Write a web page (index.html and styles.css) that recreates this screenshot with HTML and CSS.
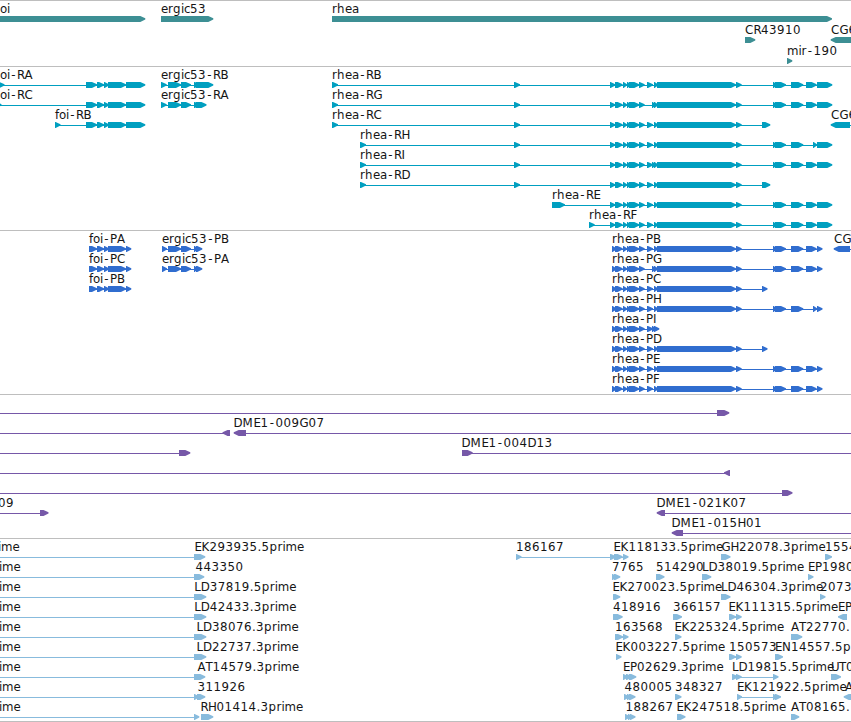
FILE: index.html
```
<!DOCTYPE html>
<html lang="en">
<head>
    <meta charset="UTF-8">
    <title>Genome Browser</title>
    <link rel="stylesheet" href="styles.css">
</head>
<body>
    <div class="tracks">
        <svg class="track genes" id="genes"></svg>
        <svg class="track transcripts" id="transcripts"></svg>
        <svg class="track proteins" id="proteins"></svg>
        <svg class="track bacs" id="bacs"></svg>
        <svg class="track ests" id="ests"></svg>
    </div>
    <script src="tracks.js"></script>
</body>
</html>
```
FILE: styles.css
```
body {
    margin: 0;
    background-color: #fff;
    overflow: hidden;
}
.tracks {
    display: flex;
    flex-direction: column;
    height: 721px;
    border-bottom: 1px solid #bebebe;
}
.track {
    display: block;
    box-sizing: border-box;
    width: 100%;
    flex: none;
    border-top: 1px solid #bebebe;
    overflow: hidden;
}
.track text {
    font-family: "DejaVu Sans", sans-serif;
    font-size: 11.8px;
    fill: #151515;
}
.track rect {
    shape-rendering: crispEdges;
}
.genes {
    height: 66px;
    fill: #3d8f94;
}
.transcripts {
    height: 164px;
    fill: #009fc0;
}
.proteins {
    height: 164px;
    fill: #306dcf;
}
.bacs {
    height: 144px;
    fill: #7658a8;
}
.ests {
    height: 183px;
    fill: #88bbdd;
}
```
FILE: tracks.js
```
const NS = 'http://www.w3.org/2000/svg';

// character widths in pixels, digits and anything else are 8
const widths = {
    A: 8, B: 7, C: 8.5, D: 9, E: 7, G: 9, H: 8.5, I: 4, K: 8, L: 6.5, M: 11, N: 9,
    P: 7, R: 7.5, T: 7, U: 8, a: 7, c: 6, e: 7, f: 4, g: 8, h: 8, i: 3, m: 11.5,
    o: 7, p: 8, r: 5, '-': 7, '.': 4
};

function add(svg, tag, attrs) {
    const el = document.createElementNS(NS, tag);
    for (const k in attrs) el.setAttribute(k, attrs[k]);
    svg.appendChild(el);
    return el;
}

// one x per character
function drawLabel(svg, x, y, label) {
    const xs = [];
    for (const ch of label) {
        xs.push(ch === '-' ? x + 1.3 : x);
        x += widths[ch] || 8;
    }
    add(svg, 'text', { x: xs.join(' '), y: y }).textContent = label;
}

function drawBlock(svg, x1, x2, y, strand) {
    const tip = Math.min(5, x2 - x1 - 0.6);
    const pts = strand < 0
        ? [[x2, y], [x1 + tip, y], [x1, y + 2.3], [x1, y + 3.4], [x1 + tip, y + 6], [x2, y + 6]]
        : [[x1, y], [x2 - tip, y], [x2, y + 2.3], [x2, y + 3.4], [x2 - tip, y + 6], [x1, y + 6]];
    add(svg, 'polygon', { points: pts.join(' ') });
}

// feature: [row, label x, label, blocks, line, strand]
function drawTrack(id, pitch, features) {
    const svg = document.getElementById(id);
    for (const [row, lx, label, blocks, line, strand] of features) {
        const y = 15 + row * pitch;
        if (line) add(svg, 'rect', { x: line[0], y: y + 3, width: line[1] - line[0], height: 1 });
        for (const b of blocks) drawBlock(svg, b[0], b[1], y, strand || 1);
    }
    for (const [row, lx, label] of features) {
        if (label) drawLabel(svg, lx, 12 + row * pitch, label);
    }
}

drawTrack('genes', 21, [
    [0, 0, 'oi', [[-20, 145.3]]],
    [0, 161, 'ergic53', [[161, 213.3]]],
    [0, 332, 'rhea', [[332, 832]]],
    [1, 745, 'CR43910', [[745, 755.3]]],
    [1, 831, 'CG6', [[830.7, 870]], null, -1],
    [2, 787, 'mir-190', [[787, 792.3]]]
]);

// exons shared by the isoforms
const foi = [[97, 104], [104, 109], [108, 126]];
const ergic = [[168, 181], [181, 191], [194, 198]];
const head = [[615, 622.7], [623, 627], [627, 631], [629, 639.3], [639, 644.7]];
const e1 = [[647, 653]];
const e2 = [[652, 656]];
const body = [[654, 658], [657, 736], [736, 741.7]];
const tail = [[773, 777], [775, 786], [791, 803.3]];
const t1 = [[806, 816.7]];
const t2 = [[813, 817]];

const foiR = [[86, 97], ...foi, [126, 145.3]];
const rHead = [[514, 520], [610, 615.3], ...head];
const rEnd = [[817, 832.3]];
const rShort = [[762, 770.3]];

drawTrack('transcripts', 20, [
    [0, 0, 'oi-RA', [[-1, 4.5], ...foiR], [0, 140]],
    [1, 0, 'oi-RC', [[-4, 1.5], ...foiR], [0, 140]],
    [2, 55, 'foi-RB', [[55, 60.5], ...foiR], [55, 140]],
    [0, 161, 'ergic53-RB', [[161, 166.7], ...ergic, [195.5, 213.3]], [161, 208]],
    [1, 161, 'ergic53-RA', [[161, 166.7], ...ergic, [195.5, 206.5]], [161, 202]],
    [0, 332, 'rhea-RB', [[332, 338], ...rHead, ...e1, ...body, ...tail, ...t1, ...rEnd], [332, 828]],
    [1, 332, 'rhea-RG', [[332, 338], ...rHead, ...e2, ...body, ...tail, ...t1, ...rEnd], [332, 828]],
    [2, 332, 'rhea-RC', [[332, 338], ...rHead, ...e1, ...body, ...rShort], [332, 768]],
    [3, 360, 'rhea-RH', [[360, 366], ...rHead, ...e1, ...body, ...tail, ...t2, ...rEnd], [360, 828]],
    [4, 360, 'rhea-RI', [[360, 366], ...rHead, ...e1, ...e2, ...body, ...tail, ...t1, ...rEnd], [360, 828]],
    [5, 360, 'rhea-RD', [[360, 366], ...rHead, ...e1, ...body, ...rShort], [360, 768]],
    [6, 552, 'rhea-RE', [[552, 565], ...rHead.slice(1), ...e1, ...body, ...tail, ...t1, ...rEnd], [552, 828]],
    [7, 589, 'rhea-RF', [[589, 594.7], ...rHead.slice(1), ...e1, ...body, ...tail, ...t1, ...rEnd], [589, 828]],
    [2, 831, 'CG6', [[830.7, 850]], [836, 851], -1]
]);

const foiP = [[89, 97], ...foi, [126, 131.3]];
const ergicP = [[162, 167], ...ergic, [196, 202.3]];
const pHead = [[612, 616.5], ...head];
const pEnd = [[817, 822.5]];
const pShort = [[762, 767.5]];

drawTrack('proteins', 20, [
    [0, 89, 'foi-PA', foiP, [89, 130]],
    [1, 89, 'foi-PC', foiP, [89, 130]],
    [2, 89, 'foi-PB', foiP, [89, 130]],
    [0, 162, 'ergic53-PB', ergicP, [162, 201]],
    [1, 162, 'ergic53-PA', ergicP, [162, 201]],
    [0, 612, 'rhea-PB', [...pHead, ...e1, ...body, ...tail, ...t1, ...pEnd], [612, 821]],
    [1, 612, 'rhea-PG', [...pHead, ...e2, ...body, ...tail, ...t1, ...pEnd], [612, 821]],
    [2, 612, 'rhea-PC', [...pHead, ...e1, ...body, ...pShort], [612, 766]],
    [3, 612, 'rhea-PH', [...pHead, ...e1, ...body, ...tail, ...t2, ...pEnd], [612, 821]],
    [4, 612, 'rhea-PI', [...pHead, ...e1, ...e2, [654, 659.3]], [612, 658]],
    [5, 612, 'rhea-PD', [...pHead, ...e1, ...body, ...pShort], [612, 766]],
    [6, 612, 'rhea-PE', [...pHead, ...e1, ...body, ...tail, ...t1, ...pEnd], [612, 821]],
    [7, 612, 'rhea-PF', [...pHead, ...e1, ...body, ...tail, ...t1, ...pEnd], [612, 821]],
    [0, 834, 'CG', [[833.7, 850]], [840, 851], -1]
]);

drawTrack('bacs', 20, [
    [0, 0, '', [[717, 729.3]], [0, 720]],
    [1, 0, '', [[222.5, 230]], [0, 226], -1],
    [1, 233.5, 'DME1-009G07', [[233.7, 246]], [240, 851], -1],
    [2, 0, '', [[179, 190.3]], [0, 182]],
    [2, 461.5, 'DME1-004D13', [[462, 472.7]], [462, 851]],
    [3, 0, '', [[724, 730]], [0, 728], -1],
    [4, 0, '', [[782, 792.5]], [0, 786]],
    [5, -2, '09', [[40, 48.5]], [0, 44]],
    [5, 656.5, 'DME1-021K07', [[656.7, 665]], [661, 851], -1],
    [6, 671.5, 'DME1-015H01', [[671.7, 683]], [677, 851], -1]
]);

drawTrack('ests', 20, [
    [0, -2, 'ime', []],
    [1, -1, 'ime', []],
    [2, -1, 'ime', []],
    [3, -1, 'ime', []],
    [4, -1, 'ime', []],
    [5, -1, 'ime', []],
    [6, -1, 'ime', []],
    [7, -1, 'ime', []],
    [8, -1, 'ime', []],
    [0, 194.5, 'EK293935.5prime', [[194, 205.3]], [0, 200]],
    [1, 195.5, '443350', [[194, 204.3]], [0, 200]],
    [2, 194.2, 'LD37819.5prime', [[194, 206.3]], [0, 200]],
    [3, 194.2, 'LD42433.3prime', [[194, 206.3]], [0, 200]],
    [4, 196.4, 'LD38076.3prime', [[194, 206.3]], [0, 200]],
    [5, 196.4, 'LD22737.3prime', [[194, 206.3]], [0, 200]],
    [6, 197.4, 'AT14579.3prime', [[194, 205.3]], [0, 200]],
    [7, 197.4, '311926', [[194, 199], [197, 205.3]], [0, 200]],
    [8, 200.4, 'RH01414.3prime', [[194, 199.3]], [0, 197]],
    [8, 0, '', [[201, 213.3]]],

    [0, 516, '186167', [[516, 521.5], [610, 616], [614, 622.7], [623, 628.5]], [516, 626]],
    [0, 613.5, 'EK118133.5prime', []],
    [0, 721.5, 'GH22078.3prime', [[721, 730.5]]],
    [0, 825, '1554', [[825, 832]]],

    [1, 612, '7765', [[612, 617], [614, 620.3]]],
    [1, 656, '514290', [[656, 664.5]]],
    [1, 702, 'LD38019.5prime', [[702, 711.3]]],
    [1, 808, 'EP1980', [[808, 813.5]]],

    [2, 612.5, 'EK270023.5prime', [[613, 618], [614, 620.3]]],
    [2, 721, 'LD46304.3prime', [[721, 730.5]]],
    [2, 820, '2073', [[820, 825.5]]],

    [3, 613, '418916', [[613, 618], [614, 622.7]]],
    [3, 673, '366157', [[673, 682]]],
    [3, 728.5, 'EK111315.5prime', [[729, 736], [736, 741.7]], [729, 740]],
    [3, 838, 'EP', [[838, 847]], null, -1],

    [4, 615, '163568', [[615, 623], [623, 628.5]], [615, 627]],
    [4, 674.5, 'EK225324.5prime', [[675, 681.5]]],
    [4, 791, 'AT22770.', [[791, 802.3]]],

    [5, 615.5, 'EK003227.5prime', [[616, 621.5]]],
    [5, 729, '150573', [[729, 736], [736, 741.7]], [729, 740]],
    [5, 775, 'EN14557.5p', [[775, 783]]],

    [6, 623, 'EP02629.3prime', [[623, 628], [626, 632], [629, 636.3]]],
    [6, 732, 'LD19815.5prime', [[732, 738], [736, 741.7], [773, 778.5]], [732, 777]],
    [6, 831, 'UT0', [[831, 841]]],

    [7, 624.4, '480005', [[624, 629], [627, 632], [629, 635.5]]],
    [7, 675, '348327', [[675, 681.5]]],
    [7, 737, 'EK121922.5prime', [[737, 742], [773, 778], [775, 781]], [737, 779]],
    [7, 845, 'A', [[843.7, 856]], null, -1],

    [8, 625.5, '188267', [[625, 630], [628, 632.5], [630, 635.5]]],
    [8, 676.5, 'EK247518.5prime', [[677, 685.5]]],
    [8, 791, 'AT08165.', [[791, 799.3]]]
]);
```
